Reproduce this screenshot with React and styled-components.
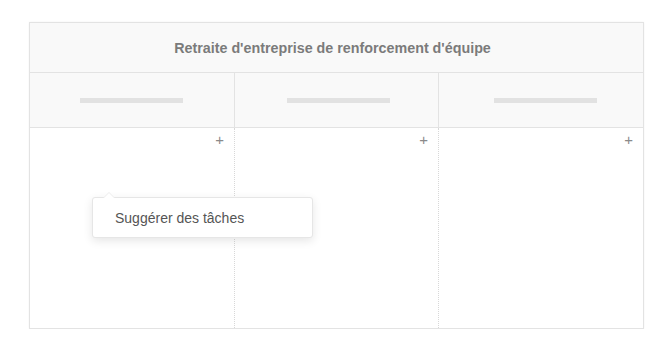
import * as React from "react";
import styled, { createGlobalStyle } from "styled-components";

const GlobalStyle = createGlobalStyle`
  body {
    margin: 0;
    background: #fff;
    font-family: "Liberation Sans", Arial, sans-serif;
  }
`;

const Page = styled.div`
  padding: 22px 0 0 29px;
`;

const Board = styled.div`
  width: 615px;
  box-sizing: border-box;
  border: 1px solid #e3e3e3;
  box-shadow: 0 0 2px rgba(0, 0, 0, 0.05);
  background: #fff;
`;

const Title = styled.div`
  height: 49px;
  display: flex;
  align-items: center;
  justify-content: center;
  padding-right: 8px;
  background: #f9f9f9;
  border-bottom: 1px solid #e3e3e3;
  font-size: 14.3px;
  font-weight: bold;
  color: #7b7b7b;
`;

const Row = styled.div`
  display: grid;
  grid-template-columns: 204px 204px 1fr;
`;

const HeadCell = styled.div`
  height: 55px;
  box-sizing: border-box;
  display: flex;
  align-items: center;
  padding-left: ${(p) => p.offset}px;
  background: #f9f9f9;
  border-bottom: 1px solid #e3e3e3;
  border-left: ${(p) => (p.first ? "none" : "1px solid #e3e3e3")};
`;

const Placeholder = styled.div`
  width: 103px;
  height: 5px;
  background: #e2e2e2;
`;

const BodyCell = styled.div`
  position: relative;
  height: 200px;
  border-left: ${(p) => (p.first ? "none" : "1px dotted #d8d8d8")};
`;

const AddButton = styled.span`
  position: absolute;
  top: 4px;
  right: 10px;
  font-size: 15px;
  line-height: 1;
  color: #8a8a8a;
  font-weight: 300;
`;

const Popover = styled.div`
  position: absolute;
  left: 62px;
  top: 69px;
  width: 221px;
  height: 41px;
  box-sizing: border-box;
  padding-left: 22px;
  display: flex;
  align-items: center;
  background: #fff;
  border: 1px solid #e6e6e6;
  border-radius: 3px;
  box-shadow: 0 3px 10px rgba(0, 0, 0, 0.1);
  font-size: 14px;
  color: #555;
  z-index: 2;

  &::before {
    content: "";
    position: absolute;
    top: -6px;
    left: 10px;
    width: 0;
    height: 0;
    border-left: 6px solid transparent;
    border-right: 6px solid transparent;
    border-bottom: 6px solid #ececec;
  }
  &::after {
    content: "";
    position: absolute;
    top: -5px;
    left: 11px;
    width: 0;
    height: 0;
    border-left: 5px solid transparent;
    border-right: 5px solid transparent;
    border-bottom: 5px solid #fff;
  }
`;

const columns = [
  { id: 0, offset: 50 },
  { id: 1, offset: 52 },
  { id: 2, offset: 55 },
];

export default function App() {
  return (
    <>
      <GlobalStyle />
      <Page>
        <Board>
          <Title>Retraite d'entreprise de renforcement d'équipe</Title>
          <Row>
            {columns.map((c) => (
              <HeadCell key={c.id} first={c.id === 0} offset={c.offset}>
                <Placeholder />
              </HeadCell>
            ))}
          </Row>
          <Row>
            {columns.map((c) => (
              <BodyCell key={c.id} first={c.id === 0}>
                <AddButton>+</AddButton>
                {c.id === 0 && <Popover>Suggérer des tâches</Popover>}
              </BodyCell>
            ))}
          </Row>
        </Board>
      </Page>
    </>
  );
}
